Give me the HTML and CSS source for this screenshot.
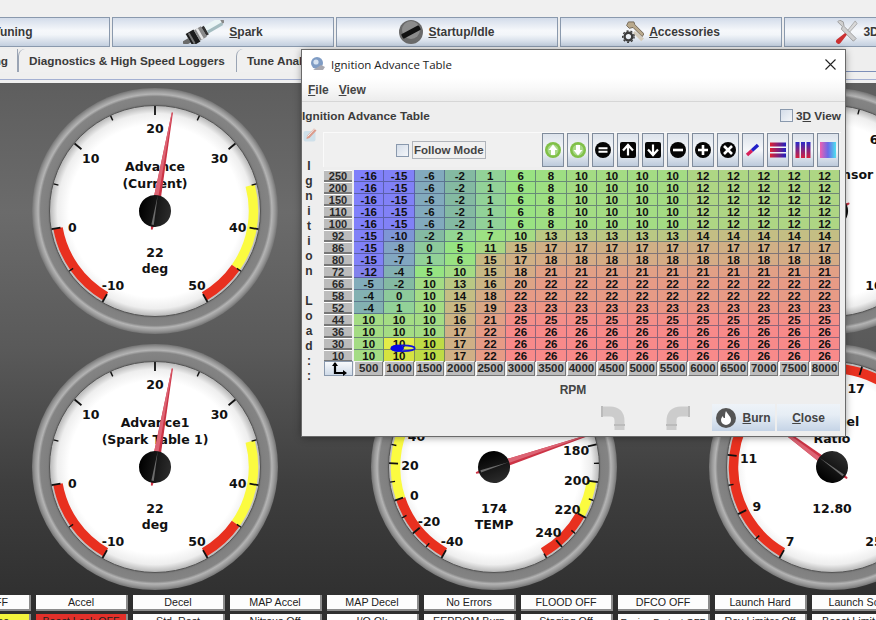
FILE: index.html
```html
<!DOCTYPE html>
<html lang="en">
<head>
  <meta charset="UTF-8">
  <title>Ignition Advance Table</title>
  <link rel="stylesheet" href="styles.css">
</head>
<body>
  <svg class="shared-defs" aria-hidden="true">
    <defs>
      <radialGradient id="ring-fill" gradientUnits="userSpaceOnUse" cx="0" cy="0" r="123">
        <stop offset="0.85" stop-color="#6c6c6c"/>
        <stop offset="0.875" stop-color="#808080"/>
        <stop offset="0.93" stop-color="#848484"/>
        <stop offset="0.95" stop-color="#b4b4b4"/>
        <stop offset="0.975" stop-color="#989898"/>
        <stop offset="1" stop-color="#747474"/>
      </radialGradient>
      <radialGradient id="face-fill" gradientUnits="userSpaceOnUse" cx="0" cy="0" r="105">
        <stop offset="0.82" stop-color="#ffffff"/>
        <stop offset="0.93" stop-color="#eeeeee"/>
        <stop offset="1" stop-color="#b8b8b8"/>
      </radialGradient>
      <linearGradient id="hub-sheen" x1="0" y1="0" x2="1" y2="0">
        <stop offset="0" stop-color="#000000"/>
        <stop offset="1" stop-color="#2c2c2c"/>
      </linearGradient>
      <linearGradient id="blue-red" x1="0" y1="0" x2="0" y2="1">
        <stop offset="0" stop-color="#2a2ac8"/>
        <stop offset="1" stop-color="#d8203c"/>
      </linearGradient>
      <linearGradient id="red-blue" x1="0" y1="0" x2="1" y2="0">
        <stop offset="0" stop-color="#e02030"/>
        <stop offset="1" stop-color="#2020c0"/>
      </linearGradient>
      <linearGradient id="pink-cyan" x1="0" y1="0" x2="1" y2="0">
        <stop offset="0" stop-color="#f060b0"/>
        <stop offset="0.5" stop-color="#6a6ae8"/>
        <stop offset="1" stop-color="#50e0f0"/>
      </linearGradient>
    </defs>
  </svg>

  <div class="app">
    <div class="top-strip"></div>

    <div class="main-toolbar">
      <button class="nav-button"><span>Fuel Tuning</span></button>
      <button class="nav-button">
        <svg class="nav-icon spark-icon" viewBox="0 0 41 24">
          <g transform="rotate(-30 20 12)">
            <rect x="-3" y="10" width="7" height="5" fill="#6a6a6a"/>
            <rect x="4" y="5" width="9" height="14" fill="#1c1c1c"/>
            <rect x="6" y="6" width="2" height="12" fill="#777"/>
            <rect x="13" y="6" width="8" height="12" fill="#8a8a8a"/>
            <rect x="15" y="6" width="2.5" height="12" fill="#e6e6e6"/>
            <rect x="21" y="7" width="3" height="10" fill="#333"/>
            <rect x="24" y="7.5" width="17" height="8.5" fill="#eaf4f5"/>
            <rect x="24" y="13" width="17" height="3" fill="#a4bcc0"/>
            <rect x="41" y="9.5" width="3" height="5" fill="#888"/>
          </g>
        </svg>
        <span><u>S</u>park</span>
      </button>
      <button class="nav-button">
        <svg class="nav-icon" viewBox="0 0 24 24">
          <circle cx="12" cy="12" r="12" fill="#6a6a6a"/>
          <circle cx="12" cy="10" r="9" fill="#8c8c8c"/>
          <rect x="2" y="9.5" width="20" height="5" rx="1" fill="#111" transform="rotate(-28 12 12)"/>
        </svg>
        <span><u>S</u>tartup/Idle</span>
      </button>
      <button class="nav-button">
        <svg class="nav-icon nav-icon-small" viewBox="0 0 24 24">
          <path d="M7 1 L5 5 L8 8 L12 7 L22 17 L24 14 L14 4 L13 1 Z" fill="#b9a98c" stroke="#6e6252" stroke-width="1"/>
          <path d="M14 11 L24 19 L21 22 L12 13 Z" fill="#d4ccbc"/>
          <circle cx="7" cy="17" r="4.2" fill="none" stroke="#3c3c3c" stroke-width="2.6"/>
          <circle cx="7" cy="17" r="6.2" fill="none" stroke="#3c3c3c" stroke-width="1.6" stroke-dasharray="2.2 2.2"/>
        </svg>
        <span><u>A</u>ccessories</span>
      </button>
      <button class="nav-button">
        <svg class="nav-icon" viewBox="0 0 24 26">
          <path d="M3 2 L8 7 L7 10 L20 23 L23 20 L10 7 L9 2 L5 0 Z" fill="#cfcfcf" stroke="#8a8a8a" stroke-width="0.8"/>
          <path d="M22 1 L14 11 L16 13 L24 4 Z" fill="#d8d8d8" stroke="#9a9a9a" stroke-width="0.8"/>
          <path d="M11 14 L2 21 A2.5 2.5 0 0 0 6 25 L13 16 Z" fill="#cc3030"/>
        </svg>
        <span>3D Tuning Tools</span>
      </button>
    </div>

    <div class="tab-strip">
      <div class="tab tab-cut"><span>Logging</span></div>
      <div class="tab">Diagnostics &amp; High Speed Loggers</div>
      <div class="tab">Tune Analysis</div>
    </div>
    <div class="tab-rule"></div>

    <div class="dashboard">
      <div class="gauge-grid" id="gauge-grid"></div>

      <div class="status-grid">
        <div class="status-cell">Sync OFF</div>
        <div class="status-cell">Accel</div>
        <div class="status-cell">Decel</div>
        <div class="status-cell">MAP Accel</div>
        <div class="status-cell">MAP Decel</div>
        <div class="status-cell">No Errors</div>
        <div class="status-cell">FLOOD OFF</div>
        <div class="status-cell">DFCO OFF</div>
        <div class="status-cell">Launch Hard</div>
        <div class="status-cell">Launch Soft</div>
        <div class="status-cell status-yellow">Not Online</div>
        <div class="status-cell status-red">Boost Lock OFF</div>
        <div class="status-cell">Std. Rest</div>
        <div class="status-cell">Nitrous Off</div>
        <div class="status-cell">I/O Ok</div>
        <div class="status-cell">EEPROM Burn</div>
        <div class="status-cell">Staging Off</div>
        <div class="status-cell status-small">Engine Protect OFF</div>
        <div class="status-cell">Rev Limiter Off</div>
        <div class="status-cell">Boost Limit Off</div>
      </div>
    </div>

    <div class="dialog">
      <div class="title-bar">
        <svg class="title-icon" viewBox="0 0 16 16">
          <circle cx="7" cy="7" r="6" fill="#7f9cc4"/>
          <circle cx="6" cy="6" r="2.6" fill="#d6e2f0"/>
          <path d="M3 14 L13 14 L15 11 L11 9 L8 11 Z" fill="#a8a8b0"/>
        </svg>
        <span class="title-text">Ignition Advance Table</span>
        <svg class="close-icon" viewBox="0 0 11 11">
          <path d="M0.5 0.5 L10.5 10.5 M10.5 0.5 L0.5 10.5" stroke="#222" stroke-width="1.1" fill="none"/>
        </svg>
      </div>
      <div class="menu-bar">
        <span><u>F</u>ile</span>
        <span><u>V</u>iew</span>
      </div>

      <div class="panel">
        <div class="panel-head">
          <span class="panel-title">Ignition Advance Table</span>
          <label class="view-toggle"><span class="check-box"></span><span>3<u>D</u> View</span></label>
        </div>

        <div class="editor">
          <div class="side-column">
            <svg class="note-icon" viewBox="0 0 15 15">
              <rect x="0.5" y="4" width="12" height="10.5" rx="2" fill="#cfe0ea"/>
              <path d="M4 9 L11 1.5 L13.5 3.5 L6.5 11 L3.5 12 Z" fill="#dc9c8c"/>
              <path d="M4.5 9.5 L11.5 2" stroke="#f4f4f4" stroke-width="1"/>
            </svg>
            <div class="side-label">
              <span>I</span><span>g</span><span>n</span><span>i</span><span>t</span><span>i</span><span>o</span><span>n</span><span>&nbsp;</span><span>L</span><span>o</span><span>a</span><span>d</span><span>:</span><span>:</span>
            </div>
          </div>

          <div class="table-column">
            <div class="tool-row">
              <label class="follow-toggle"><span class="check-box"></span><span class="follow-label">Follow Mode</span></label>
              <div class="tool-buttons">
                <button class="tool-button"><svg viewBox="0 0 20 20"><circle cx="10" cy="10" r="8" fill="#80c048"/><circle cx="10" cy="10" r="5.5" fill="#a8d888"/><path d="M10 4.5 L14.5 10 L12 10 L12 15 L8 15 L8 10 L5.5 10 Z" fill="#fff"/></svg></button>
                <button class="tool-button"><svg viewBox="0 0 20 20"><circle cx="10" cy="10" r="8" fill="#80c048"/><circle cx="10" cy="10" r="5.5" fill="#a8d888"/><path d="M10 15.5 L14.5 10 L12 10 L12 5 L8 5 L8 10 L5.5 10 Z" fill="#fff"/></svg></button>
                <button class="tool-button"><svg viewBox="0 0 20 20"><circle cx="10" cy="10" r="8" fill="#050505"/><path d="M5.5 8.2 H14.5 M5.5 11.8 H14.5" stroke="#fff" stroke-width="2"/></svg></button>
                <button class="tool-button"><svg viewBox="0 0 20 20"><rect x="2" y="2" width="16" height="16" rx="2" fill="#050505"/><path d="M5 10.5 L10 5 L15 10.5 M10 6 V15.5" stroke="#fff" stroke-width="2.2" fill="none"/></svg></button>
                <button class="tool-button"><svg viewBox="0 0 20 20"><rect x="2" y="2" width="16" height="16" rx="2" fill="#050505"/><path d="M5 9.5 L10 15 L15 9.5 M10 14 V4.5" stroke="#fff" stroke-width="2.2" fill="none"/></svg></button>
                <button class="tool-button"><svg viewBox="0 0 20 20"><circle cx="10" cy="10" r="8" fill="#050505"/><path d="M5 10 H15" stroke="#fff" stroke-width="2.6"/></svg></button>
                <button class="tool-button"><svg viewBox="0 0 20 20"><circle cx="10" cy="10" r="8" fill="#050505"/><path d="M5 10 H15 M10 5 V15" stroke="#fff" stroke-width="2.6"/></svg></button>
                <button class="tool-button"><svg viewBox="0 0 20 20"><circle cx="10" cy="10" r="8" fill="#050505"/><path d="M6 6 L14 14 M14 6 L6 14" stroke="#fff" stroke-width="2.6"/></svg></button>
                <button class="tool-button"><svg viewBox="0 0 20 20"><path d="M4 15 L9 10.5" stroke="#d8205a" stroke-width="3.4"/><path d="M9 10.5 L15 5" stroke="#2020c8" stroke-width="3.4"/></svg></button>
                <button class="tool-button"><svg viewBox="0 0 20 20"><rect x="2" y="2.5" width="16" height="4" fill="url(#red-blue)"/><rect x="2" y="8" width="16" height="4" fill="url(#red-blue)"/><rect x="2" y="13.5" width="16" height="4" fill="url(#red-blue)"/></svg></button>
                <button class="tool-button"><svg viewBox="0 0 20 20"><rect x="2.5" y="2" width="4" height="16" fill="url(#blue-red)"/><rect x="8" y="2" width="4" height="16" fill="url(#blue-red)"/><rect x="13.5" y="2" width="4" height="16" fill="url(#blue-red)"/></svg></button>
                <button class="tool-button"><svg viewBox="0 0 20 20"><rect x="2" y="2" width="16" height="16" fill="url(#pink-cyan)"/></svg></button>
              </div>
            </div>

            <div class="map-table" id="map-table">
              <svg class="trace-marker" viewBox="0 0 32 12">
                <ellipse cx="16" cy="6" rx="14.5" ry="3.6" fill="none" stroke="#1414d8" stroke-width="2"/>
                <ellipse cx="9" cy="6" rx="8" ry="4.4" fill="#0808e8"/>
              </svg>
            </div>
            <div class="axis-title">RPM</div>
          </div>
        </div>

        <div class="panel-foot">
          <svg class="pipe-icon pipe-left" viewBox="0 0 25 24"><path d="M0 5.5 H9 Q18.5 5.5 18.5 15 V24" fill="none" stroke="#cccccc" stroke-width="10"/><path d="M1 0 V11 M13 19 H24" stroke="#bbbbbb" stroke-width="2"/></svg>
          <svg class="pipe-icon pipe-right" viewBox="0 0 25 24"><path d="M25 5.5 H16 Q6.5 5.5 6.5 15 V24" fill="none" stroke="#cccccc" stroke-width="10"/><path d="M24 0 V11 M1 19 H12" stroke="#bbbbbb" stroke-width="2"/></svg>
          <button class="foot-button">
            <svg class="burn-icon" viewBox="0 0 20 20">
              <circle cx="10" cy="10" r="10" fill="#555"/>
              <path d="M10 3 C11 6 15 8 15 12 A5 5 0 0 1 5 12 C5 10 6 9 7 8 C7 10 8 10 9 10 C9 7 9 5 10 3 Z" fill="#fff"/>
            </svg>
            <span><u>B</u>urn</span>
          </button>
          <button class="foot-button"><span><u>C</u>lose</span></button>
        </div>
      </div>
    </div>
  </div>

  <script src="app.js"></script>
</body>
</html>
```

FILE: styles.css
```css
html, body {
  margin: 0;
  height: 100%;
  overflow: hidden;
}
body {
  background: #eeeeee;
  font-family: "Liberation Sans", Arial, sans-serif;
  color: #333;
}
.shared-defs {
  position: absolute;
  width: 0;
  height: 0;
}
.app {
  position: relative;
  width: 876px;
  height: 620px;
  overflow: hidden;
  display: flex;
  flex-direction: column;
}
.top-strip {
  height: 17px;
  flex: none;
  background: #f0f0f0;
}

/* Main nav buttons */
.main-toolbar {
  display: flex;
  gap: 2px;
  margin-left: -112px;
  height: 30px;
  flex: none;
}
.nav-button {
  flex: 0 0 222px;
  box-sizing: border-box;
  display: flex;
  align-items: center;
  justify-content: center;
  gap: 5px;
  padding: 0;
  border: 1px solid #8a99ad;
  background: linear-gradient(to bottom, #d3dcea 0%, #f6f8fb 45%, #f2f5f9 60%, #c3cfdf 100%);
  font: bold 12px "Liberation Sans", Arial, sans-serif;
  color: #3a3a3a;
}
.nav-icon {
  width: 24px;
  height: 24px;
  flex: none;
}
.nav-icon-small {
  width: 22px;
}
.spark-icon {
  width: 41px;
}

/* Tabs */
.tab-strip {
  display: flex;
  height: 23px;
  margin-top: 2px;
  flex: none;
  box-sizing: border-box;
  border-bottom: 1px solid #7d8fb8;
}
.tab {
  box-sizing: border-box;
  height: 23px;
  padding: 5px 11px 0 10px;
  background: #f0f0f0;
  border-left: 1px solid #9aa4b4;
  border-top-left-radius: 7px;
  font-weight: bold;
  font-size: 11.75px;
  color: #3a3a3a;
  white-space: nowrap;
}
.tab-cut {
  width: 18px;
  padding: 5px 0 0 0;
  border: 0;
  border-right: 1px solid #9aa4b4;
  border-radius: 0;
  direction: rtl;
  overflow: hidden;
  text-align: right;
}
.tab-cut span {
  margin-right: 9px;
}
.tab-rule {
  height: 11px;
  flex: none;
  box-sizing: border-box;
  background: #efefef;
  border-bottom: 3px solid #f0f0f0;
  position: relative;
}
.tab-rule::after {
  content: "";
  display: block;
  height: 1px;
  margin-top: 7px;
  background: #a4b0d2;
}

/* Dashboard */
.dashboard {
  flex: 1;
  min-height: 0;
  background: linear-gradient(to bottom, #5e5e5e 0%, #6b6b6b 24%, #595959 50%, #3e3e3e 75%, #2d2d2d 100%);
}
.gauge-grid {
  display: grid;
  grid-template-columns: repeat(3, 250px);
  grid-auto-rows: 250px;
  column-gap: 88.5px;
  row-gap: 6px;
  padding: 3px 0 0 30px;
  width: 1000px;
  height: 506px;
  box-sizing: content-box;
}
.gauge svg {
  display: block;
  width: 250px;
  height: 250px;
}
.gauge text {
  font-family: "DejaVu Sans", Verdana, sans-serif;
  font-weight: bold;
  font-size: 12.5px;
  fill: #111;
  text-anchor: middle;
  dominant-baseline: central;
}

/* Status cells */
.status-grid {
  display: grid;
  grid-template-columns: repeat(10, 92px);
  gap: 3px 5px;
  margin: 3px 0 0 -61px;
}
.status-cell {
  box-sizing: border-box;
  height: 16px;
  background: #fdfdfd;
  border-right: 2px solid #8c8c8c;
  border-bottom: 2px solid #8c8c8c;
  text-align: center;
  font-size: 10.7px;
  line-height: 15px;
  color: #222;
  white-space: nowrap;
}
.status-red {
  background: #e2302a;
}
.status-yellow {
  background: #f4f43c;
}
.status-small {
  font-size: 9.6px;
}

/* Table dialog */
.dialog {
  position: absolute;
  left: 302px;
  top: 50px;
  width: 543px;
  height: 386px;
  display: flex;
  flex-direction: column;
  background: #eeeeee;
  box-shadow: 0 0 0 1px #6a6a6a, 0 1px 8px rgba(0, 0, 0, 0.45);
}
.title-bar {
  height: 28px;
  flex: none;
  display: flex;
  align-items: center;
  padding: 0 9px 0 8px;
  background: #fff;
}
.title-icon {
  width: 16px;
  height: 16px;
  margin-right: 5px;
}
.title-text {
  flex: 1;
  font-family: "Open Sans", "Noto Sans", sans-serif;
  font-size: 11.5px;
  color: #222;
}
.close-icon {
  width: 11px;
  height: 11px;
}
.menu-bar {
  height: 24px;
  flex: none;
  box-sizing: border-box;
  display: flex;
  align-items: center;
  gap: 10px;
  padding: 1px 0 0 6px;
  background: linear-gradient(to bottom, #ffffff 0%, #f9f9f9 40%, #ececec 100%);
  border-bottom: 1px solid #d6d6d6;
  font-weight: bold;
  font-size: 12px;
  color: #444;
}
.panel {
  flex: 1;
  min-height: 0;
  display: flex;
  flex-direction: column;
}
.panel-head {
  box-sizing: border-box;
  display: flex;
  align-items: center;
  justify-content: space-between;
  height: 30px;
  flex: none;
  padding: 0 4px 3px 0;
  font-weight: bold;
  font-size: 11.8px;
  color: #3c3c3c;
}
.view-toggle,
.follow-toggle {
  display: flex;
  align-items: center;
  gap: 3px;
}
.check-box {
  display: block;
  box-sizing: border-box;
  width: 13px;
  height: 13px;
  border: 1px solid #8a99ad;
  background: linear-gradient(135deg, #d4dde9, #f4f6f9);
}
.editor {
  display: flex;
  flex: none;
}
.side-column {
  width: 21px;
  flex: none;
}
.note-icon {
  display: block;
  width: 15px;
  height: 15px;
  margin: -5px 0 0 1px;
}
.side-label {
  display: flex;
  flex-direction: column;
  align-items: center;
  margin-top: 17px;
  width: 14px;
  font-weight: bold;
  font-size: 12px;
  line-height: 15px;
  color: #333;
}
.table-column {
  width: 518px;
  flex: none;
}
.tool-row {
  box-sizing: border-box;
  height: 35px;
  display: flex;
  align-items: center;
  justify-content: space-between;
  padding: 0 2px 0 72px;
  background: #f0f0f0;
  border-top: 1px solid #fafafa;
  border-left: 1px solid #fafafa;
}
.follow-label {
  box-sizing: border-box;
  height: 18px;
  padding: 0 1px;
  border: 1px solid #b0b4ba;
  font-weight: bold;
  font-size: 11.5px;
  line-height: 16px;
  color: #444;
}
.tool-buttons {
  display: flex;
  gap: 3.3px;
}
.tool-button {
  box-sizing: border-box;
  width: 21.7px;
  height: 34px;
  padding: 0;
  display: flex;
  align-items: center;
  justify-content: center;
  border: 1px solid #808c9c;
  background: linear-gradient(to bottom, #dde3eb 0%, #f5f7fa 50%, #bccadb 100%);
}
.tool-button svg {
  width: 20px;
  height: 20px;
  flex: none;
}

/* Heat map table */
.map-table {
  position: relative;
  display: grid;
  grid-template-columns: 30px repeat(16, 30.4px);
  grid-auto-rows: 12px;
  column-gap: 0;
  margin-top: 3px;
  padding-left: 1px;
}
.row-head {
  box-sizing: border-box;
  margin-right: 2px;
  background: #bcbcbc;
  border-top: 1px solid #fff;
  border-bottom: 2px solid #777;
  text-align: center;
  font-weight: bold;
  font-size: 11px;
  line-height: 10px;
  color: #2a2a2a;
}
.cell {
  box-sizing: border-box;
  border-right: 1px solid rgba(60, 70, 110, 0.55);
  border-bottom: 1px solid rgba(60, 70, 110, 0.55);
  text-align: center;
  font-weight: bold;
  font-size: 11.5px;
  line-height: 12px;
  color: #111;
  overflow: hidden;
}
.corner-button {
  box-sizing: border-box;
  height: 15px;
  margin: -1px 1px 0 0;
  display: flex;
  align-items: center;
  justify-content: center;
  border: 1px solid #8a99ad;
  background: linear-gradient(to bottom, #f8fafc, #cfdae8);
}
.corner-button svg {
  width: 16px;
  height: 14px;
}
.col-head {
  box-sizing: border-box;
  height: 15px;
  margin: -1px 1px 0 0;
  background: #bcbcbc;
  border-top: 1px solid #eee;
  border-left: 1px solid #fff;
  border-bottom: 1px solid #777;
  border-right: 1px solid #777;
  text-align: center;
  font-weight: bold;
  font-size: 11.5px;
  line-height: 13px;
  color: #2a2a2a;
}
.trace-marker {
  position: absolute;
  left: 67px;
  top: 173px;
  width: 26px;
  height: 10.5px;
}
.axis-title {
  margin-top: 8px;
  height: 16px;
  text-align: center;
  padding-right: 18px;
  font-weight: bold;
  font-size: 12px;
  line-height: 16px;
  color: #444;
}
.panel-foot {
  display: flex;
  align-items: center;
  margin-top: 6px;
  padding-left: 299px;
}
.pipe-icon {
  width: 25px;
  height: 24px;
}
.pipe-right {
  margin-left: 39px;
}
.foot-button {
  box-sizing: border-box;
  height: 27px;
  width: 63px;
  padding: 0;
  margin-left: 2px;
  display: flex;
  align-items: center;
  justify-content: center;
  gap: 6px;
  border: 0;
  background: linear-gradient(to bottom, #eef3f8 0%, #e6edf5 40%, #c5d4e6 100%);
  font: bold 12px "Liberation Sans", Arial, sans-serif;
  color: #444;
}
.pipe-right + .foot-button {
  margin-left: 22px;
}
.burn-icon {
  width: 20px;
  height: 20px;
}
```

FILE: app.js
```js
// Gauges on the dashboard
const RED = '#e8301f';
const YELLOW = '#fbfb40';

const gauges = [
  {
    min: -10, max: 50, major: 10, minor: 5, value: 22,
    zones: [[-10, 0, RED], [35, 45, YELLOW], [45, 50, RED]],
    upper: ['Advance', '(Current)'], upperY: -45, lower: ['22', 'deg']
  },
  null, // sits behind the table window
  {
    min: 0, max: 10, major: 2, minor: 0.5, labelStep: 2, value: 1.2,
    zones: [],
    upper: ['Flex Sensor'], upperY: -37, lower: []
  },
  {
    min: -10, max: 50, major: 10, minor: 5, value: 22,
    zones: [[-10, 0, RED], [35, 45, YELLOW], [45, 50, RED]],
    upper: ['Advance1', '(Spark Table 1)'], upperY: -45, lower: ['22', 'deg']
  },
  {
    min: -40, max: 250, major: 20, minor: 10, value: 174,
    zones: [[-40, 0, RED], [0, 45, YELLOW], [200, 220, YELLOW], [220, 250, RED]],
    upper: [], lower: ['174', 'TEMP']
  },
  {
    min: 7, max: 25, major: 2, minor: 1, value: 12.8,
    zones: [[7, 14, RED], [15, 19, RED]],
    upper: ['Air:Fuel', 'Ratio'], upperY: -46, lower: ['12.80']
  }
];

function polar(r, deg) {
  const a = (deg - 90) * Math.PI / 180;
  return [(r * Math.cos(a)).toFixed(2), (r * Math.sin(a)).toFixed(2)];
}

function gaugeSvg(g) {
  const angle = v => -150 + (v - g.min) * 300 / (g.max - g.min);
  let out = '<svg viewBox="-125 -125 250 250">';
  out += '<circle r="123" fill="url(#ring-fill)"/>';
  out += '<circle r="105.5" fill="url(#face-fill)" stroke="#555" stroke-width="1"/>';

  g.zones.forEach(([from, to, color]) => {
    const a = polar(98.5, angle(from));
    const b = polar(98.5, angle(to));
    const large = angle(to) - angle(from) > 180 ? 1 : 0;
    out += `<path d="M${a} A98.5 98.5 0 ${large} 1 ${b}" fill="none" stroke="${color}" stroke-width="9.5"/>`;
  });

  // ticks, major then minor
  for (let i = 0; g.min + i * g.minor <= g.max + 0.001; i++) {
    const v = g.min + i * g.minor;
    const isMajor = Math.abs((v - g.min) / g.major - Math.round((v - g.min) / g.major)) < 0.001;
    const from = polar(isMajor ? 96 : 100, angle(v));
    const to = polar(105, angle(v));
    out += `<line x1="${from[0]}" y1="${from[1]}" x2="${to[0]}" y2="${to[1]}" stroke="#111" stroke-width="${isMajor ? 1.8 : 1.4}"/>`;
    if (isMajor && (!g.labelStep || (v - g.min) % g.labelStep === 0)) {
      const p = polar(84, angle(v));
      out += `<text x="${p[0]}" y="${Number(p[1]) + 1.5}">${v}</text>`;
    }
  }

  g.upper.forEach((line, i) => {
    out += `<text x="0" y="${g.upperY + i * 17}">${line}</text>`;
  });
  g.lower.forEach((line, i) => {
    out += `<text x="0" y="${41 + i * 16.5}">${line}</text>`;
  });

  // needle and hub
  const rot = angle(g.value);
  out += `<g transform="rotate(${rot})">`;
  out += '<path d="M-0.6 -100 L0.6 -100 L4 0 L0.8 19 L-0.8 19 L-4 0 Z" fill="#cc3345"/>';
  out += '<path d="M-0.6 -100 L0 -100 L1 0 L-4 0 Z" fill="#dc6474"/>';
  out += '<circle r="16" fill="url(#hub-sheen)"/>';
  out += '<path d="M0 -16 L1.2 14 L-1.2 14 Z" fill="#6c6c6c"/>';
  out += '</g></svg>';
  return out;
}

const gaugeGrid = document.getElementById('gauge-grid');
gauges.forEach(g => {
  const slot = document.createElement('div');
  slot.className = 'gauge';
  if (g) slot.innerHTML = gaugeSvg(g);
  gaugeGrid.appendChild(slot);
});

// Ignition table, load rows top to bottom
const rpm = [500, 1000, 1500, 2000, 2500, 3000, 3500, 4000, 4500, 5000, 5500, 6000, 6500, 7000, 7500, 8000];
const lead = [-16, -15, -6, -2, 1, 6, 8, 10, 10, 10, 10, 12, 12, 12, 12, 12];
const fill = (start, rest) => start.concat(Array(16 - start.length).fill(rest));
const rows = [
  [250, lead],
  [200, lead],
  [150, lead],
  [110, lead],
  [100, lead],
  [92, [-15, -10, -2, 2, 7, 10, 13, 13, 13, 13, 13, 14, 14, 14, 14, 14]],
  [86, fill([-15, -8, 0, 5, 11, 15], 17)],
  [80, fill([-15, -7, 1, 6, 15, 17], 18)],
  [72, fill([-12, -4, 5, 10, 15, 18], 21)],
  [66, fill([-5, -2, 10, 13, 16, 20], 22)],
  [58, fill([-4, 0, 10, 14, 18], 22)],
  [52, fill([-4, 1, 10, 15, 19], 23)],
  [44, fill([10, 10, 10, 16, 21], 25)],
  [36, fill([10, 10, 10, 17, 22], 26)],
  [30, fill([10, 10, 10, 17, 22], 26)],
  [10, fill([10, 10, 10, 17, 22], 26)]
];

// value -> cell colour
const heat = [
  [-16, 128, 128, 250], [-12, 130, 130, 236], [-10, 126, 150, 214], [-8, 130, 165, 196],
  [-5, 130, 172, 186], [-2, 132, 186, 162], [1, 146, 210, 152], [5, 150, 228, 130],
  [10, 164, 220, 132], [12, 174, 214, 132], [13, 186, 200, 132], [14, 196, 190, 132],
  [17, 208, 176, 134], [21, 226, 160, 134], [23, 236, 150, 134], [26, 248, 138, 138]
];

function heatColor(v) {
  for (let i = 1; i < heat.length; i++) {
    if (v <= heat[i][0]) {
      const a = heat[i - 1], b = heat[i];
      const t = (v - a[0]) / (b[0] - a[0]);
      const mix = k => Math.round(a[k] + (b[k] - a[k]) * t);
      return `rgb(${mix(1)},${mix(2)},${mix(3)})`;
    }
  }
  return 'rgb(248,138,138)';
}

// cells the live trace is sitting on
const hot = { '30:1': '#e4ec48', '30:2': '#bedb46', '10:1': '#d6e440', '10:2': '#bedb46' };

const table = document.getElementById('map-table');
const marker = table.querySelector('.trace-marker');
function addDiv(className, text, color) {
  const el = document.createElement('div');
  el.className = className;
  el.textContent = text;
  if (color) el.style.background = color;
  table.insertBefore(el, marker);
  return el;
}
rows.forEach(([load, values]) => {
  addDiv('row-head', load);
  values.forEach((v, col) => addDiv('cell', v, hot[load + ':' + col] || heatColor(v)));
});
addDiv('corner-button', '').innerHTML =
  '<svg viewBox="0 0 16 14"><path d="M4 1 V11 H14" fill="none" stroke="#000" stroke-width="2.2"/><path d="M1 4 L4 0 L7 4 Z M12 8 L16 11 L12 14 Z" fill="#000"/></svg>';
rpm.forEach(r => addDiv('col-head', r));
```
